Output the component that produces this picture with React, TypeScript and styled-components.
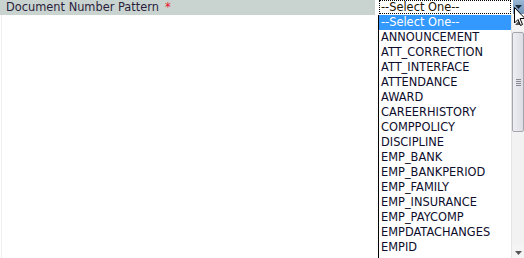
import React from "react";
import styled, { createGlobalStyle } from "styled-components";

const GlobalStyle = createGlobalStyle`
  html, body {
    margin: 0;
    padding: 0;
    background: #ffffff;
    overflow: hidden;
  }
  body {
    font-family: "DejaVu Sans", Verdana, sans-serif;
    font-size: 11.4px;
  }
`;

const Page = styled.div`
  width: 524px;
  height: 258px;
  display: flex;
  flex-direction: column;
`;

const FieldRow = styled.div`
  display: flex;
  height: 15px;
`;

const Label = styled.div`
  width: 375px;
  background: #c9d4d0;
  color: #2b1d3c;
  padding-left: 6px;
  box-sizing: border-box;
  line-height: 15px;
  white-space: nowrap;
`;

const Required = styled.span`
  color: #e8102a;
  margin-left: 6px;
`;

const SelectWrap = styled.div`
  position: relative;
  flex: 1;
  margin-left: 3px;
  display: flex;
`;

const SelectValue = styled.div`
  flex: 1;
  height: 14px;
  margin-left: 1px;
  border: 1px dotted #000;
  box-sizing: border-box;
  line-height: 12px;
  padding-left: 1px;
  color: #1c1200;
`;

const ArrowButton = styled.div`
  width: 11px;
  height: 14px;
  margin-left: 2px;
  background: linear-gradient(#9ab8d6, #6f93ba);
  display: flex;
  align-items: center;
  justify-content: center;
`;

const Cursor = styled.svg`
  position: absolute;
  left: 136px;
  top: 7px;
  z-index: 3;
`;

const Dropdown = styled.div`
  position: absolute;
  top: 15px;
  left: 0;
  width: 146px;
  height: 246px;
  display: flex;
  border-left: 1px solid #000;
  background: #fff;
  z-index: 2;
`;

const Options = styled.div`
  flex: 1;
  overflow: hidden;
`;

const Option = styled.div<{ $active?: boolean }>`
  height: 15px;
  line-height: 15px;
  padding-left: 2px;
  white-space: nowrap;
  color: ${(p) => (p.$active ? "#ffffff" : "#0d0d2b")};
  background: ${(p) => (p.$active ? "#3399ff" : "transparent")};
`;

const Scrollbar = styled.div`
  width: 14px;
  display: flex;
  flex-direction: column;
  background: #f2f2f2;
  border-left: 1px solid #e4e4e4;
  box-sizing: border-box;
`;

const ScrollButton = styled.div`
  height: 16px;
  display: flex;
  align-items: center;
  justify-content: center;
  background: #f4f4f4;
`;

const Thumb = styled.div`
  height: 98px;
  margin: 1px 1px 0 0;
  border: 1px solid #a6a6b0;
  border-radius: 2px;
  background: linear-gradient(90deg, #eeeef3, #dcdce4);
  display: flex;
  flex-direction: column;
  align-items: center;
  justify-content: center;
  gap: 1px;
`;

const Grip = styled.div`
  width: 5px;
  height: 1px;
  background: #8a8a96;
`;

const Track = styled.div`
  flex: 1;
`;

const Body = styled.div`
  flex: 1;
  margin-left: 1px;
  border-left: 1px solid #efefef;
`;

const options = [
  "--Select One--",
  "ANNOUNCEMENT",
  "ATT_CORRECTION",
  "ATT_INTERFACE",
  "ATTENDANCE",
  "AWARD",
  "CAREERHISTORY",
  "COMPPOLICY",
  "DISCIPLINE",
  "EMP_BANK",
  "EMP_BANKPERIOD",
  "EMP_FAMILY",
  "EMP_INSURANCE",
  "EMP_PAYCOMP",
  "EMPDATACHANGES",
  "EMPID",
];

export default function App() {
  return (
    <Page>
      <GlobalStyle />
      <FieldRow>
        <Label>
          Document Number Pattern<Required>*</Required>
        </Label>
        <SelectWrap>
          <SelectValue>--Select One--</SelectValue>
          <ArrowButton>
            <svg width="7" height="4" viewBox="0 0 7 4">
              <path d="M0 0 H7 L3.5 4 Z" fill="#1b2838" />
            </svg>
          </ArrowButton>
          <Cursor width="12" height="20" viewBox="0 0 12 20">
            <path
              d="M0.5 0.5 V16 L4 12.5 L6.5 18.5 L8.5 17.5 L6 11.5 H11 Z"
              fill="#fff"
              stroke="#000"
              strokeWidth="1"
            />
          </Cursor>
          <Dropdown>
            <Options>
              {options.map((o, i) => (
                <Option key={o} $active={i === 0}>
                  {o}
                </Option>
              ))}
            </Options>
            <Scrollbar>
              <ScrollButton>
                <svg width="7" height="4" viewBox="0 0 7 4">
                  <path d="M0 4 H7 L3.5 0 Z" fill="#555" />
                </svg>
              </ScrollButton>
              <Thumb>
                <Grip />
                <Grip />
                <Grip />
                <Grip />
              </Thumb>
              <Track />
              <ScrollButton>
                <svg width="7" height="4" viewBox="0 0 7 4">
                  <path d="M0 0 H7 L3.5 4 Z" fill="#555" />
                </svg>
              </ScrollButton>
            </Scrollbar>
          </Dropdown>
        </SelectWrap>
      </FieldRow>
      <Body />
    </Page>
  );
}
